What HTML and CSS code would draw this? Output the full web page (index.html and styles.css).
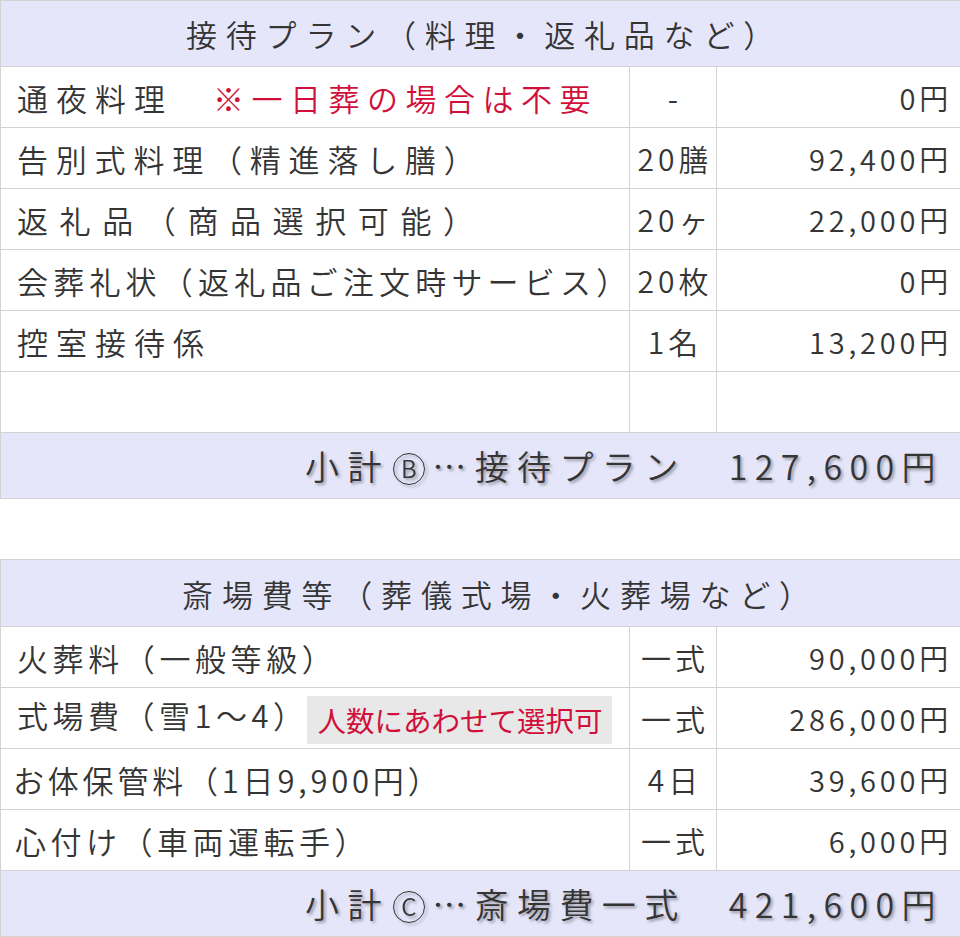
FILE: index.html
```html
<!DOCTYPE html>
<html lang="ja">
<head>
<meta charset="utf-8">
<title>接待プラン・斎場費等</title>
<link rel="stylesheet" href="styles.css">
</head>
<body>
<div class="page">
  <table class="plan">
    <colgroup><col class="c-name"><col class="c-qty"><col class="c-price"></colgroup>
    <thead>
      <tr><th colspan="3" class="head">接待プラン（料理・返礼品など）</th></tr>
    </thead>
    <tbody>
      <tr>
        <td class="name ls8">通夜料理<span class="note">※一日葬の場合は不要</span></td>
        <td class="qty">-</td>
        <td class="price">0円</td>
      </tr>
      <tr>
        <td class="name ls78">告別式料理（精進落し膳）</td>
        <td class="qty">20膳</td>
        <td class="price">92,400円</td>
      </tr>
      <tr>
        <td class="name ls116">返礼品（商品選択可能）</td>
        <td class="qty">20ヶ</td>
        <td class="price">22,000円</td>
      </tr>
      <tr>
        <td class="name ls52 fit">会葬礼状（返礼品ご注文時サービス<span class="last">）</span></td>
        <td class="qty">20枚</td>
        <td class="price">0円</td>
      </tr>
      <tr>
        <td class="name ls8">控室接待係</td>
        <td class="qty">1名</td>
        <td class="price">13,200円</td>
      </tr>
      <tr>
        <td class="name"></td>
        <td class="qty"></td>
        <td class="price"></td>
      </tr>
      <tr>
        <td colspan="3" class="total"><span class="t-label">小計<span class="circ">B</span>…接待プラン</span><span class="t-amount">127,600円</span></td>
      </tr>
    </tbody>
  </table>

  <table class="plan second">
    <colgroup><col class="c-name"><col class="c-qty"><col class="c-price"></colgroup>
    <thead>
      <tr><th colspan="3" class="head head2">斎場費等（葬儀式場・火葬場など）</th></tr>
    </thead>
    <tbody>
      <tr>
        <td class="name ls46">火葬料（一般等級）</td>
        <td class="qty">一式</td>
        <td class="price">90,000円</td>
      </tr>
      <tr>
        <td class="name ls45">式場費（雪1～4）<span class="badge">人数にあわせて選択可</span></td>
        <td class="qty">一式</td>
        <td class="price">286,000円</td>
      </tr>
      <tr>
        <td class="name ls38 tight">お体保管料（1日9,900円）</td>
        <td class="qty">4日</td>
        <td class="price">39,600円</td>
      </tr>
      <tr>
        <td class="name ls45 tight2">心付け（車両運転手）</td>
        <td class="qty">一式</td>
        <td class="price">6,000円</td>
      </tr>
      <tr>
        <td colspan="3" class="total"><span class="t-label">小計<span class="circ">C</span>…斎場費一式</span><span class="t-amount">421,600円</span></td>
      </tr>
    </tbody>
  </table>
</div>
</body>
</html>
```

FILE: styles.css
```css
html, body {
  margin: 0;
  padding: 0;
  background: #ffffff;
}

body {
  font-family: "Noto Sans CJK JP", "Noto Sans", sans-serif;
  color: #353535;
  font-size: 31px;
  font-weight: 350;
}

.page {
  width: 960px;
}

.plan {
  width: 960px;
  border-collapse: collapse;
  table-layout: fixed;
}

.plan.second {
  margin-top: 60px;
}

.c-name { width: 629px; }
.c-qty { width: 87px; }
.c-price { width: 244px; }

.plan th,
.plan td {
  border: 1px solid #d2d2d2;
  padding: 0;
  white-space: nowrap;
  overflow: hidden;
}

.head {
  height: 65px;
  background: #e6e6fa;
  font-weight: 350;
  font-size: 31px;
  text-align: center;
  letter-spacing: 8.8px;
  padding-left: 8px !important;
}

.head2 {
  height: 66px;
  padding-left: 40px !important;
}

.plan td {
  height: 60px;
}

.name {
  padding-left: 16px !important;
  text-align: left;
}

.name.tight { padding-left: 12px !important; }
.name.tight2 { padding-left: 14px !important; }

.name.fit .last {
  letter-spacing: 0;
}

.ls38 { letter-spacing: 3.8px; }
.ls45 { letter-spacing: 4.5px; }
.ls46 { letter-spacing: 4.6px; }
.ls52 { letter-spacing: 5.2px; }
.ls78 { letter-spacing: 7.8px; }
.ls8 { letter-spacing: 8px; }
.ls116 { letter-spacing: 11.6px; }

.note {
  color: #d0103a;
  margin-left: 40px;
  letter-spacing: 7.5px;
}

.badge {
  display: inline-block;
  margin-left: -2px;
  padding: 0 9px 0 11px;
  height: 48px;
  line-height: 48px;
  background: #e8e8e8;
  color: #d0103a;
  font-size: 28.5px;
  font-weight: 400;
  letter-spacing: 0;
  vertical-align: middle;
}

.qty {
  text-align: center;
  font-size: 30px;
  letter-spacing: 4px;
  padding-left: 4px !important;
}

.price {
  text-align: right;
  font-size: 29px;
  letter-spacing: 3.8px;
  padding-right: 8px !important;
}

.total {
  height: 65px !important;
  background: #e6e6fa;
  text-align: right;
  padding-right: 17px !important;
  font-size: 34px;
  text-shadow: 2px 2px 3px rgba(0, 0, 0, 0.35);
}

.t-label {
  letter-spacing: 8.4px;
}

.circ {
  display: inline-block;
  box-sizing: border-box;
  width: 32px;
  height: 32px;
  margin: 0 7.4px 0 3px;
  border: 1.6px solid #353535;
  border-radius: 50%;
  font-size: 24px;
  line-height: 28.8px;
  text-align: center;
  letter-spacing: 0;
  vertical-align: 2.5px;
  text-shadow: none;
  filter: drop-shadow(2px 2px 1.5px rgba(0, 0, 0, 0.35));
}

.t-amount {
  margin-left: 42px;
  letter-spacing: 7.4px;
}
```
